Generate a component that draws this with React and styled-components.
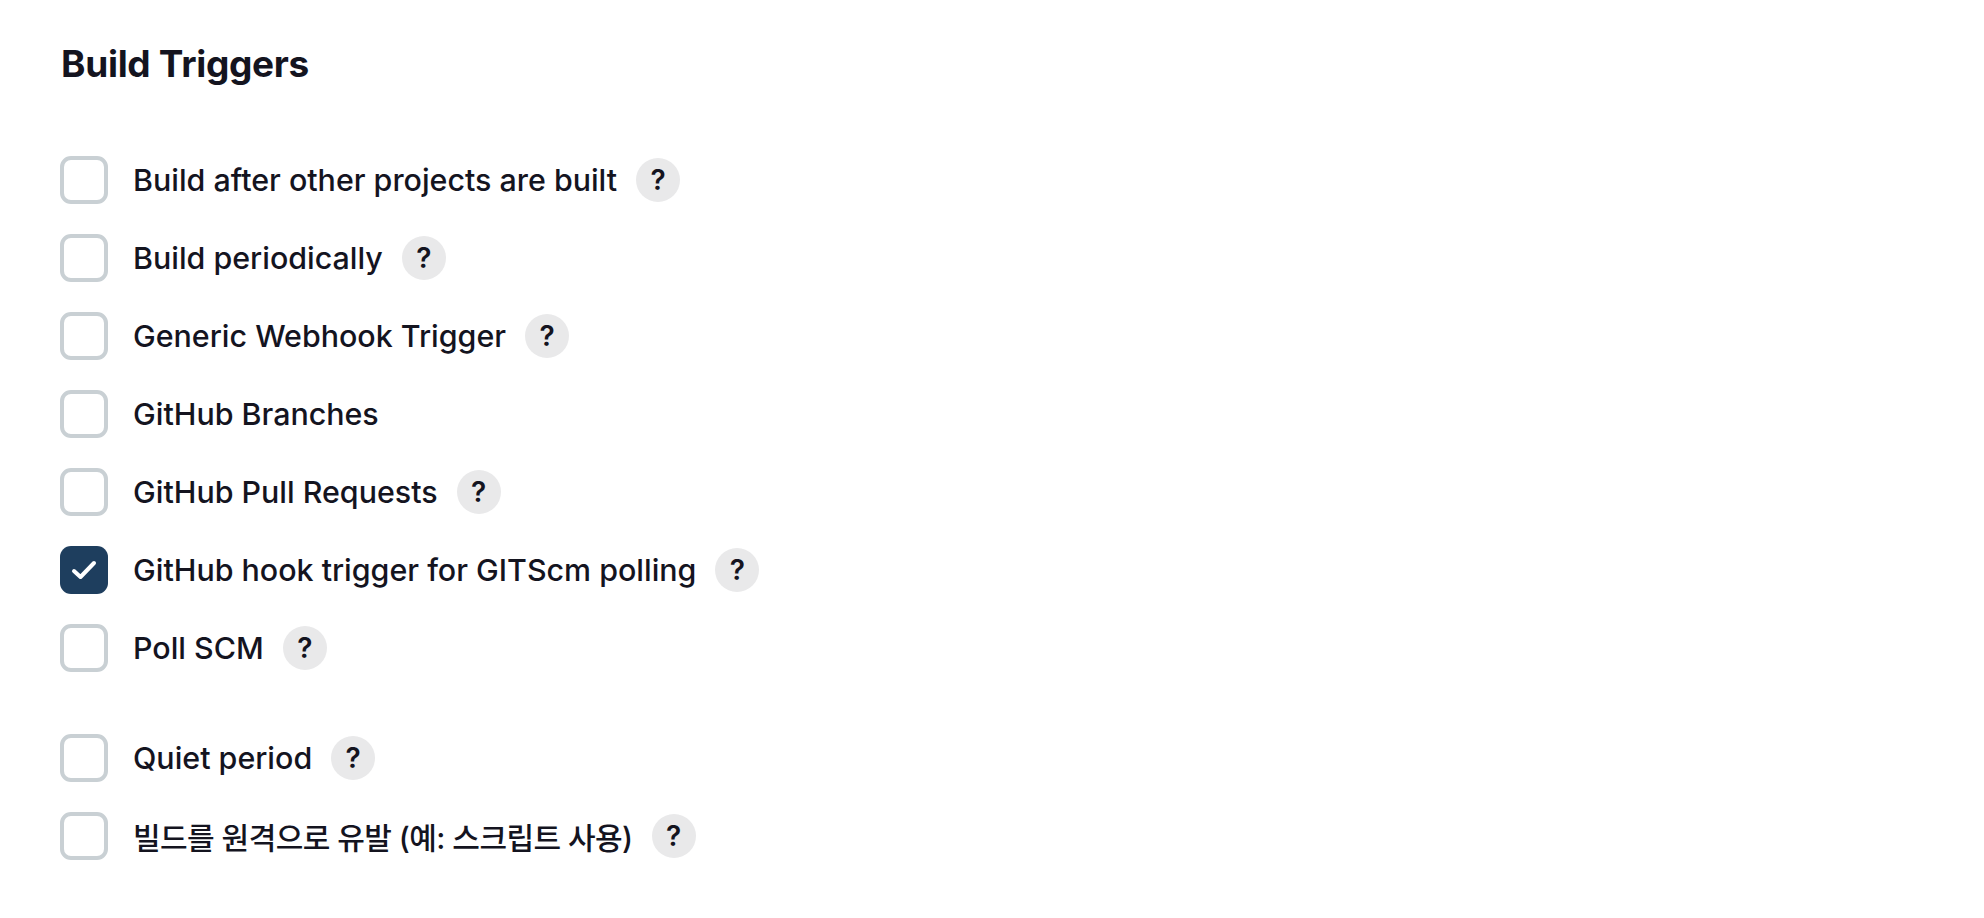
import React from "react";
import styled, { createGlobalStyle } from "styled-components";

const Global = createGlobalStyle`
  html, body { margin: 0; padding: 0; background: #ffffff; }
  body { font-family: Inter, "Noto Sans CJK KR", sans-serif; color: #14141f; }
`;

const Page = styled.main`
  padding: 38px 0 0 60px;
`;

const Heading = styled.h2`
  margin: 0 0 51px 1px;
  font-size: 37px;
  line-height: 52px;
  font-weight: 700;
  letter-spacing: -0.3px;
  color: #14141f;
`;

const List = styled.div`
  display: flex;
  flex-direction: column;
`;

const Row = styled.label`
  display: flex;
  align-items: center;
  height: 78px;
  margin-top: ${(p) => (p.$spaced ? "32px" : "0")};
`;

const Box = styled.span`
  box-sizing: border-box;
  flex: none;
  width: 48px;
  height: 48px;
  border-radius: 11px;
  border: ${(p) => (p.$checked ? "none" : "4px solid #c9d0d4")};
  background: ${(p) => (p.$checked ? "#1e3e5e" : "#ffffff")};
  display: flex;
  align-items: center;
  justify-content: center;
`;

const Label = styled.span`
  margin-left: 25px;
  font-size: ${(p) => (p.$ko ? "30px" : "30.4px")};
  font-weight: 500;
  letter-spacing: ${(p) => (p.$ko ? "-0.55px" : "0")};
  color: #14141f;
  white-space: nowrap;
`;

const Help = styled.span`
  flex: none;
  margin-left: 19px;
  width: 44px;
  height: 44px;
  border-radius: 50%;
  background: #e9e9ea;
  display: flex;
  align-items: center;
  justify-content: center;
  font-size: 28px;
  font-weight: 600;
  color: #14141f;
`;

const Check = () => (
  <svg width="48" height="48" viewBox="0 0 48 48" fill="none">
    <path d="M14 25 L20.5 31 L34 17" stroke="#ffffff" strokeWidth="4" strokeLinecap="round" strokeLinejoin="round" />
  </svg>
);

const items = [
  { label: "Build after other projects are built", help: true },
  { label: "Build periodically", help: true },
  { label: "Generic Webhook Trigger", help: true },
  { label: "GitHub Branches", help: false },
  { label: "GitHub Pull Requests", help: true },
  { label: "GitHub hook trigger for GITScm polling", help: true, checked: true },
  { label: "Poll SCM", help: true },
  { label: "Quiet period", help: true, spaced: true },
  { label: "빌드를 원격으로 유발 (예: 스크립트 사용)", help: true, ko: true },
];

export default function App() {
  return (
    <>
      <Global />
      <Page>
        <Heading>Build Triggers</Heading>
        <List>
          {items.map((it) => (
            <Row key={it.label} $spaced={it.spaced}>
              <Box $checked={it.checked}>{it.checked && <Check />}</Box>
              <Label $ko={it.ko}>{it.label}</Label>
              {it.help && <Help>?</Help>}
            </Row>
          ))}
        </List>
      </Page>
    </>
  );
}
